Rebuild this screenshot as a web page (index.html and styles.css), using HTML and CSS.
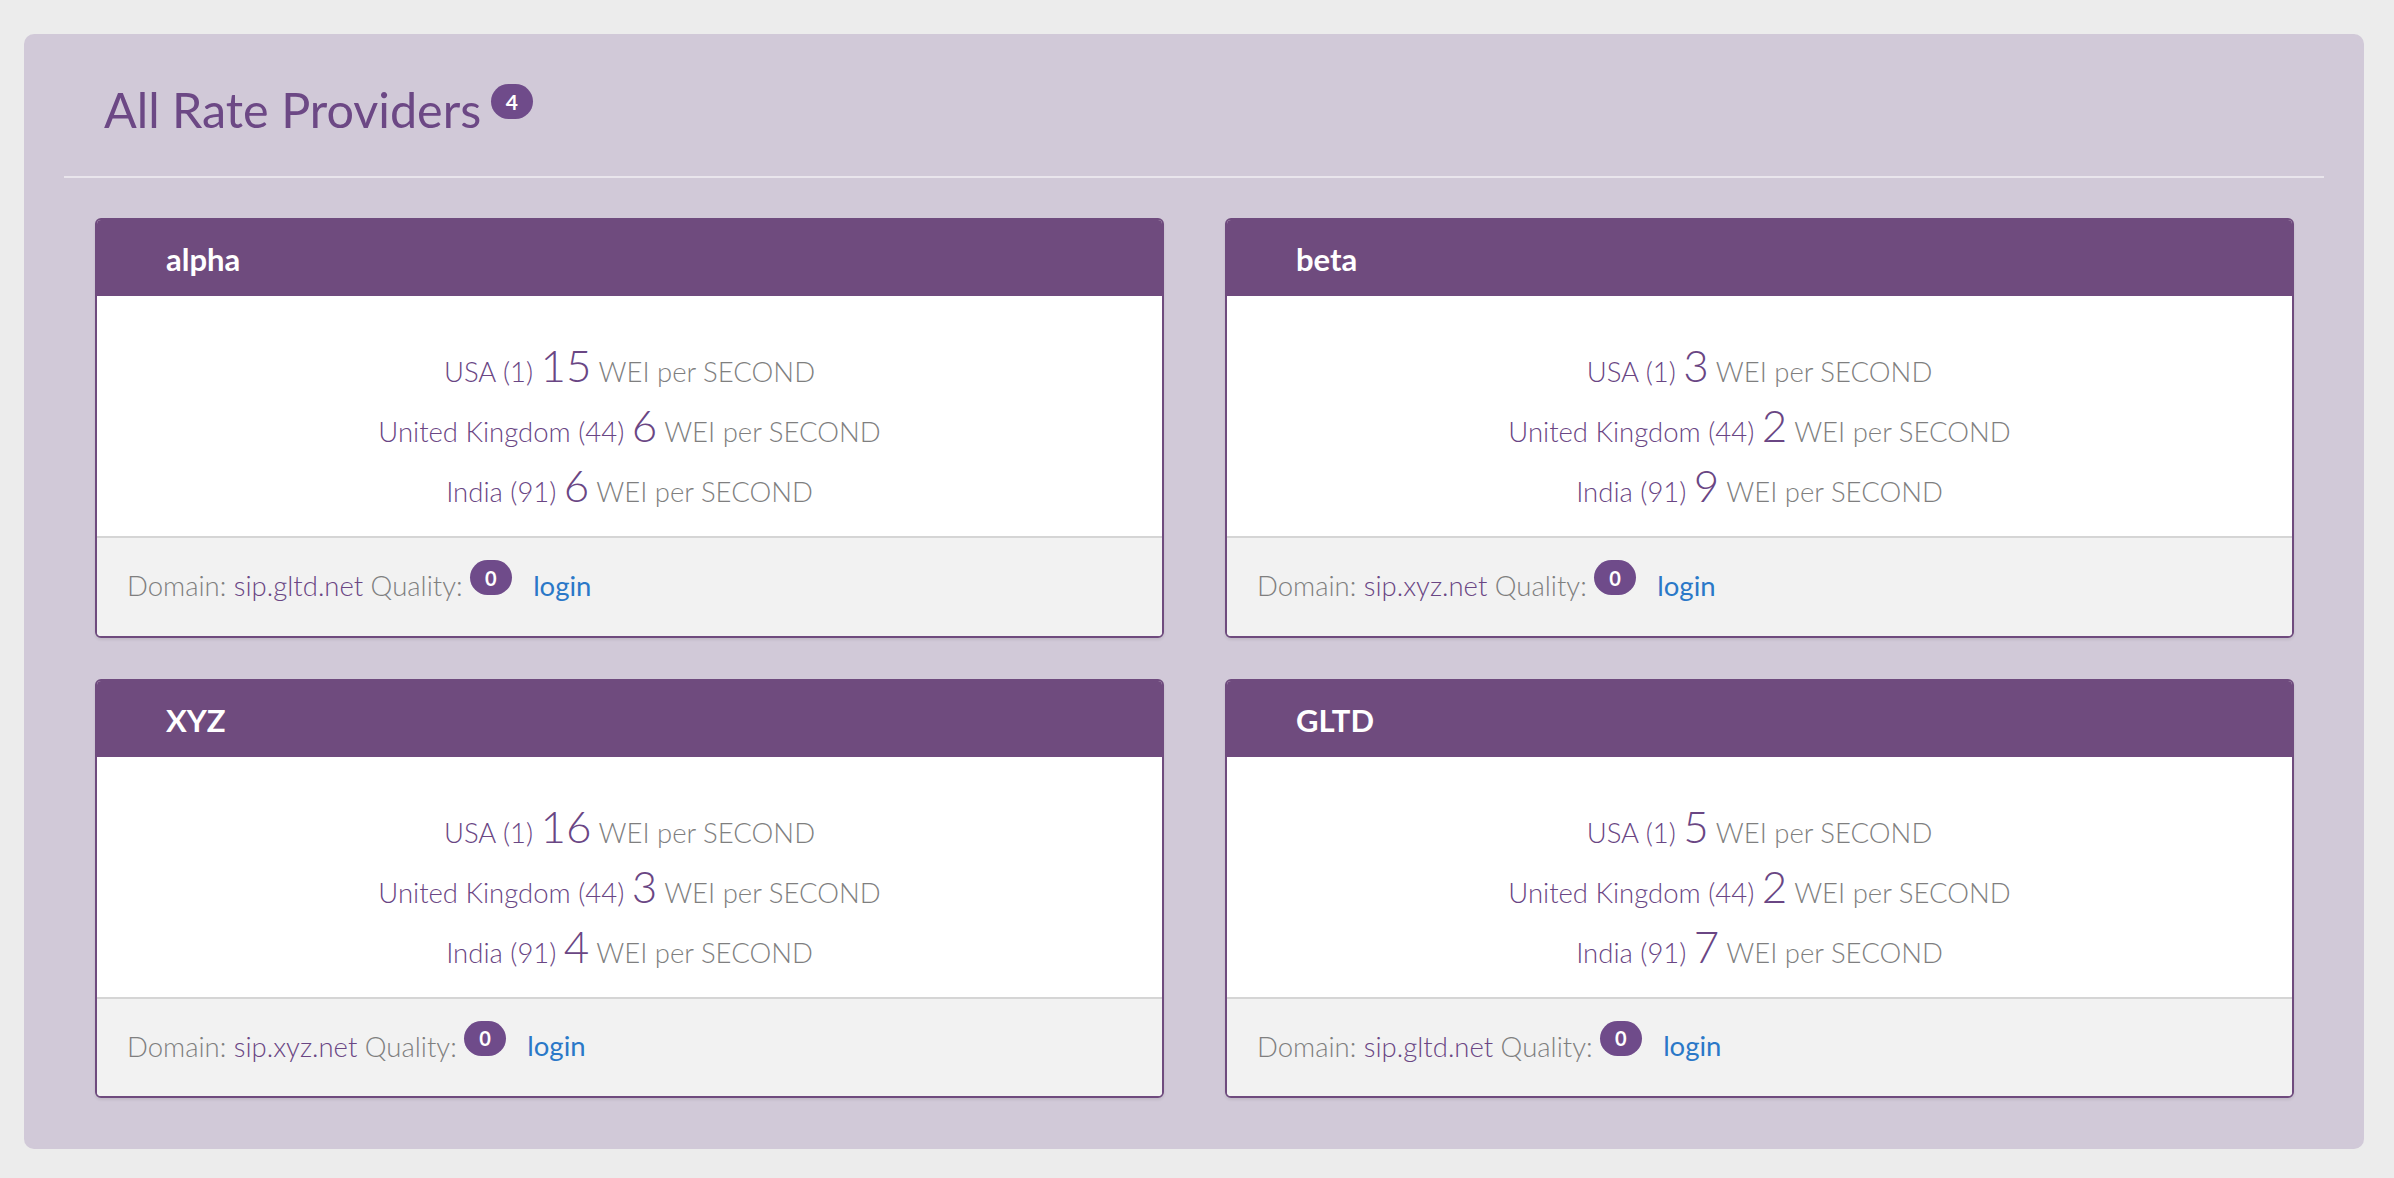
FILE: index.html
```html
<!DOCTYPE html>
<html>
<head>
<meta charset="utf-8">
<link rel="stylesheet" href="styles.css">
</head>
<body>
<div class="panel">
  <h1 class="title">All Rate Providers <span class="badge badge-title">4</span></h1>
  <hr class="rule">
  <div class="grid">
    <div class="card">
      <div class="card-head">alpha</div>
      <div class="card-body">
        <div class="rate"><span class="country">USA (1)</span> <span class="num">15</span> WEI per SECOND</div>
        <div class="rate"><span class="country">United Kingdom (44)</span> <span class="num">6</span> WEI per SECOND</div>
        <div class="rate"><span class="country">India (91)</span> <span class="num">6</span> WEI per SECOND</div>
      </div>
      <div class="card-foot">Domain: <span class="domain">sip.gltd.net</span> Quality: <span class="badge badge-q">0</span> <a class="login" href="#">login</a></div>
    </div>
    <div class="card">
      <div class="card-head">beta</div>
      <div class="card-body">
        <div class="rate"><span class="country">USA (1)</span> <span class="num">3</span> WEI per SECOND</div>
        <div class="rate"><span class="country">United Kingdom (44)</span> <span class="num">2</span> WEI per SECOND</div>
        <div class="rate"><span class="country">India (91)</span> <span class="num">9</span> WEI per SECOND</div>
      </div>
      <div class="card-foot">Domain: <span class="domain">sip.xyz.net</span> Quality: <span class="badge badge-q">0</span> <a class="login" href="#">login</a></div>
    </div>
    <div class="card">
      <div class="card-head">XYZ</div>
      <div class="card-body">
        <div class="rate"><span class="country">USA (1)</span> <span class="num">16</span> WEI per SECOND</div>
        <div class="rate"><span class="country">United Kingdom (44)</span> <span class="num">3</span> WEI per SECOND</div>
        <div class="rate"><span class="country">India (91)</span> <span class="num">4</span> WEI per SECOND</div>
      </div>
      <div class="card-foot">Domain: <span class="domain">sip.xyz.net</span> Quality: <span class="badge badge-q">0</span> <a class="login" href="#">login</a></div>
    </div>
    <div class="card">
      <div class="card-head">GLTD</div>
      <div class="card-body">
        <div class="rate"><span class="country">USA (1)</span> <span class="num">5</span> WEI per SECOND</div>
        <div class="rate"><span class="country">United Kingdom (44)</span> <span class="num">2</span> WEI per SECOND</div>
        <div class="rate"><span class="country">India (91)</span> <span class="num">7</span> WEI per SECOND</div>
      </div>
      <div class="card-foot">Domain: <span class="domain">sip.gltd.net</span> Quality: <span class="badge badge-q">0</span> <a class="login" href="#">login</a></div>
    </div>
  </div>
</div>
</body>
</html>
```

FILE: styles.css
```css
html, body {
  margin: 0;
  padding: 0;
}
body {
  background: #ececec;
  font-family: Lato, "Open Sans", sans-serif;
  padding: 34px 30px 30px 24px;
}
.panel {
  background: #d1c9d8;
  border-radius: 10px;
  padding: 49px 40px 51px 40px;
}
.title {
  margin: 0;
  font-size: 48.5px;
  line-height: 53px;
  font-weight: 400;
  color: #6c4885;
  padding-left: 40px;
}
.badge {
  display: inline-block;
  background: #6f4b8a;
  color: #fff;
  font-weight: 700;
  font-size: 20px;
  line-height: 1;
  padding: 7.5px 15px;
  border-radius: 18px;
  font-family: Lato, sans-serif;
}
.badge-title {
  font-size: 21px;
  padding: 7px 15px;
  margin-left: -3px;
  vertical-align: 18px;
}
.badge-q {
  vertical-align: 10px;
}
.rule {
  margin: 40px 0;
  border: 0;
  border-top: 2px solid #e9e5ec;
  height: 0;
}
.grid {
  display: grid;
  grid-template-columns: 1fr 1fr;
  column-gap: 61px;
  row-gap: 41px;
  padding: 0 30px 0 31px;
}
.card {
  border: 2px solid #6f4b7e;
  border-radius: 6px;
  overflow: hidden;
  background: #fff;
  box-shadow: 0 2px 3px rgba(0,0,0,0.08);
}
.card-head {
  background: #6f4b7e;
  color: #fff;
  font-weight: 700;
  font-size: 31px;
  height: 75px;
  line-height: 76px;
  padding: 1px 0 0 69px;
}
.card-body {
  padding: 46px 0 14px;
  text-align: center;
  font-size: 27.5px;
  font-weight: 300;
  color: #7f7f7f;
}
.rate {
  line-height: 60px;
  height: 60px;
}
.country {
  color: #6a4684;
}
.num {
  color: #6a4684;
  font-size: 44px;
  line-height: 1;
}
.card-foot {
  background: #f2f2f2;
  border-top: 2px solid #d5d5d5;
  padding: 22px 30px 30px;
  font-size: 27.5px;
  font-weight: 300;
  color: #7f7f7f;
  line-height: 40px;
}
.domain {
  color: #6a4684;
}
.login {
  color: #2a78c8;
  font-weight: 400;
  text-decoration: none;
  margin-left: 14px;
}
```
